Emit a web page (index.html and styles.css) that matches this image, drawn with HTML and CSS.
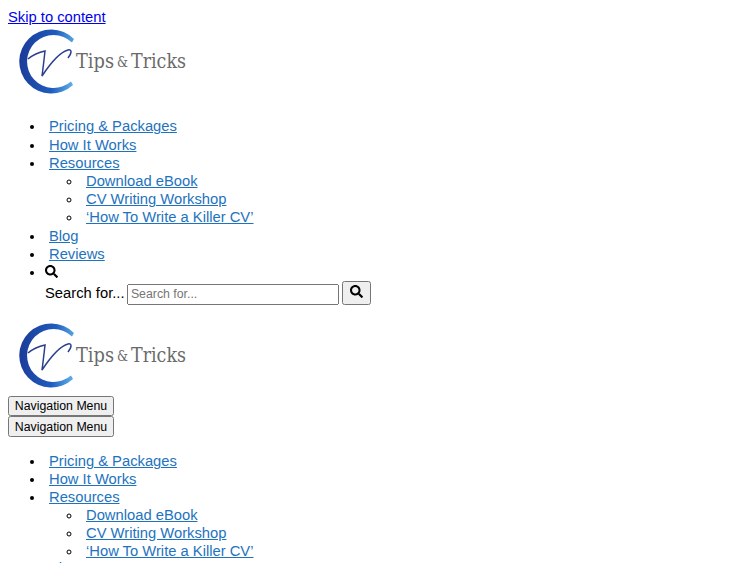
FILE: index.html
```html
<!DOCTYPE html>
<html lang="en">
<head>
    <meta charset="UTF-8">
    <meta name="viewport" content="width=device-width, initial-scale=1.0">
    <title>CV Tips &amp; Tricks</title>
    <link rel="stylesheet" href="styles.css">
</head>
<body>
    <svg class="defs" width="0" height="0">
        <defs>
            <linearGradient id="ringFill" x1="0" y1="0.2" x2="1" y2="0.3">
                <stop offset="0" stop-color="#1b3a98"/>
                <stop offset="0.65" stop-color="#1f5cbd"/>
                <stop offset="1" stop-color="#5aa9e6"/>
            </linearGradient>
            <symbol id="logo" viewBox="0 0 188 75">
                <path d="M66 13A32 32 0 1 0 65 59L63 55.500A26.500 26.500 0 1 1 64 16.500Z" fill="url(#ringFill)"/>
                <path d="M20 33C26 28 32 26 37 25C36 34 35 43 34 50C42 38 52 26 60 24C64 23 64 27 60 32" fill="none" stroke="#2b3f8f" stroke-width="1.500"/>
                <text class="logo-text" x="68" y="42" textLength="38" lengthAdjust="spacingAndGlyphs">Tips</text>
                <text class="logo-text logo-amp" x="109" y="41" textLength="11" lengthAdjust="spacingAndGlyphs">&amp;</text>
                <text class="logo-text" x="123" y="42" textLength="55" lengthAdjust="spacingAndGlyphs">Tricks</text>
            </symbol>
            <symbol id="search" viewBox="0 0 512 512">
                <path d="M505 442.700L405.300 343c-4.500-4.500-10.600-7-17-7H372c27.600-35.300 44-79.700 44-128C416 93.100 322.900 0 208 0S0 93.100 0 208s93.100 208 208 208c48.300 0 92.700-16.400 128-44v16.300c0 6.400 2.500 12.500 7 17l99.700 99.700c9.400 9.400 24.600 9.400 33.900 0l28.300-28.300c9.400-9.400 9.400-24.600.1-34zM208 336c-70.700 0-128-57.200-128-128 0-70.700 57.200-128 128-128 70.700 0 128 57.200 128 128 0 70.700-57.200 128-128 128z"/>
            </symbol>
        </defs>
    </svg>

    <a href="#content">Skip to content</a>

    <div class="logo-row">
        <a href="#"><svg class="logo" width="188" height="75"><use href="#logo"/></svg></a>
    </div>

    <ul class="menu menu-top">
        <li><a class="nav-link" href="#">Pricing &amp; Packages</a></li>
        <li><a class="nav-link" href="#">How It Works</a></li>
        <li>
            <a class="nav-link" href="#">Resources</a>
            <ul class="sub-menu">
                <li><a class="nav-link" href="#">Download eBook</a></li>
                <li><a class="nav-link" href="#">CV Writing Workshop</a></li>
                <li><a class="nav-link" href="#">‘How To Write a Killer CV’</a></li>
            </ul>
        </li>
        <li><a class="nav-link" href="#">Blog</a></li>
        <li><a class="nav-link" href="#">Reviews</a></li>
        <li class="search-item">
            <svg class="icon" width="13" height="13"><use href="#search"/></svg>
            <form class="search-form">
                <label for="s">Search for...</label>
                <input type="text" id="s" placeholder="Search for...">
                <button type="button"><svg class="icon" width="13" height="13"><use href="#search"/></svg></button>
            </form>
        </li>
    </ul>

    <div class="logo-row">
        <a href="#"><svg class="logo" width="188" height="75"><use href="#logo"/></svg></a>
    </div>

    <button class="menu-toggle" type="button">Navigation Menu</button>
    <button class="menu-toggle" type="button">Navigation Menu</button>

    <ul class="menu menu-bottom">
        <li><a class="nav-link" href="#">Pricing &amp; Packages</a></li>
        <li><a class="nav-link" href="#">How It Works</a></li>
        <li>
            <a class="nav-link" href="#">Resources</a>
            <ul class="sub-menu">
                <li><a class="nav-link" href="#">Download eBook</a></li>
                <li><a class="nav-link" href="#">CV Writing Workshop</a></li>
                <li><a class="nav-link" href="#">‘How To Write a Killer CV’</a></li>
            </ul>
        </li>
        <li><a class="nav-link" href="#">Blog</a></li>
        <li><a class="nav-link" href="#">Reviews</a></li>
    </ul>
</body>
</html>
```

FILE: styles.css
```css
body {
    font-family: "Liberation Sans", Arial, sans-serif;
    font-size: 14.750px;
    line-height: 18px;
    background-color: #fff;
    color: #000;
}
.defs {
    position: absolute;
}
.logo-row {
    height: 76px;
}
.logo {
    display: block;
}
.logo-text {
    font-family: "DejaVu Serif", serif;
    font-size: 20px;
    fill: #6a6a6a;
}
.logo-amp {
    font-size: 14px;
}
.nav-link {
    color: #1e73be;
    padding-left: 4px;
}
.menu {
    margin: 15px 0;
    padding-left: 37px;
}
.menu-top > li {
    padding-bottom: 0.600px;
}
.menu-bottom {
    margin-top: 16px;
    line-height: 17.900px;
}
.sub-menu {
    margin: 0;
    padding-left: 37px;
}
.icon {
    display: inline-block;
    vertical-align: -1px;
}
.menu-top > .search-item {
    padding-bottom: 0;
    line-height: 17px;
}
.search-form {
    margin: 0;
    display: flex;
    align-items: center;
    gap: 2.400px;
    line-height: 18px;
}
.search-form input {
    box-sizing: border-box;
    align-self: flex-end;
    width: 212px;
    height: 21px;
    font-size: 12.300px;
    padding: 1px 2px;
}
.search-form button {
    box-sizing: border-box;
    width: 29px;
    height: 24px;
    margin-left: 0.600px;
    padding: 0;
}
.menu-toggle {
    display: block;
    box-sizing: border-box;
    width: 106px;
    height: 20.500px;
    padding: 0;
    font-size: 12.300px;
    color: #000;
}
```
